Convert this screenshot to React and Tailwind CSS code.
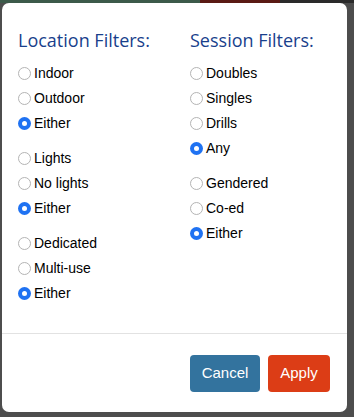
import { useState } from "react";

const groups = {
  location: [
    { name: "env", options: ["Indoor", "Outdoor", "Either"], def: "Either" },
    { name: "lights", options: ["Lights", "No lights", "Either"], def: "Either" },
    { name: "use", options: ["Dedicated", "Multi-use", "Either"], def: "Either" },
  ],
  session: [
    { name: "type", options: ["Doubles", "Singles", "Drills", "Any"], def: "Any" },
    { name: "gender", options: ["Gendered", "Co-ed", "Either"], def: "Either" },
  ],
};

const Radio = ({ label, checked, onPick }) => (
  <label className="flex h-[25px] items-center cursor-pointer" onClick={onPick}>
    {checked ? (
      <span className="flex h-[13px] w-[13px] items-center justify-center rounded-full bg-[#1f72f2]">
        <span className="h-[5px] w-[5px] rounded-full bg-white"></span>
      </span>
    ) : (
      <span className="h-[13px] w-[13px] rounded-full border border-[#b4b4b4] bg-white"></span>
    )}
    <span className="ml-[3px] text-[14px] text-black">{label}</span>
  </label>
);

const Column = ({ title, list, value, setValue }) => (
  <div className="flex flex-col">
    <div className="text-[18px] font-medium leading-[22px] text-[#193f8c] font-['Open_Sans',sans-serif]">
      {title}
    </div>
    <div className="mt-[10px] flex flex-col gap-[10px]">
      {list.map((g) => (
        <div key={g.name} className="flex flex-col">
          {g.options.map((o) => (
            <Radio
              key={o}
              label={o}
              checked={(value[g.name] ?? g.def) === o}
              onPick={() => setValue((v) => ({ ...v, [g.name]: o }))}
            />
          ))}
        </div>
      ))}
    </div>
  </div>
);

const App = () => {
  let [value, setValue] = useState({});

  return (
    <div className="h-[417px] w-[354px] overflow-hidden bg-[#4d4d4d] font-['Liberation_Sans',Arial,sans-serif]">
      <div className="flex h-[3px]">
        <div className="w-[200px] bg-[#3c5a4a]"></div>
        <div className="w-[80px] bg-[#5a1a14]"></div>
        <div className="flex-1 bg-[#2a2a2a]"></div>
      </div>
      <div className="ml-[2px] flex h-[409px] w-[345px] flex-col rounded-[7px] bg-white">
        <div className="grid flex-1 grid-cols-[172px_1fr] pl-[16px] pt-[26px]">
          <Column title="Location Filters:" list={groups.location} value={value} setValue={setValue} />
          <Column title="Session Filters:" list={groups.session} value={value} setValue={setValue} />
        </div>
        <div className="h-px bg-[#e2e2e2]"></div>
        <div className="flex justify-end gap-[8px] pb-[20px] pl-4 pr-[17px] pt-[21px]">
          <button className="h-[37px] w-[70px] rounded-[4px] bg-[#33739e] text-[15px] text-white">
            Cancel
          </button>
          <button className="h-[37px] w-[62px] rounded-[4px] bg-[#dc3d16] text-[15px] text-white">
            Apply
          </button>
        </div>
      </div>
    </div>
  );
};

export default App;
